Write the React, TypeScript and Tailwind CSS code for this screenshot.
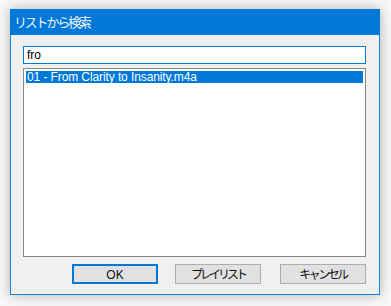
export default function App() {
  return (
    <div className="h-[306px] w-[391px] bg-[#f7f7f7] pl-[10px] pt-[9px] [font-family:'Liberation_Sans','Noto_Sans_CJK_JP',sans-serif]">
      <div className="flex h-[286px] w-[370px] flex-col border border-t-0 border-[#1883d7] bg-[#f0f0f0] shadow-[0_0_12px_rgba(0,0,0,0.28)]">
        <div className="-mx-px flex h-[26px] items-center bg-[#0078d7] pl-[4px]">
          <span className="text-[13px] tracking-[-2.2px] text-[#eef4fb] [font-family:'Noto_Sans_CJK_JP',sans-serif]">
            リストから検索
          </span>
        </div>
        <div className="flex flex-1 flex-col pl-[12px] pr-[13px] pt-[11px]">
          <div className="flex h-[18px] items-center border border-[#0078d7] bg-white pl-[3px] text-[12px] text-black">
            fro
          </div>
          <div className="mt-[4px] h-[189px] border border-[#828790] bg-white p-[2px]">
            <div className="flex h-[12px] items-center bg-[#0078d7] pl-[1px] text-[12px] leading-none tracking-[-0.1px] text-white">
              01 - From Clarity to Insanity.m4a
            </div>
          </div>
          <div className="mt-[7px] flex justify-end gap-[17px] text-[12px] text-[#111]">
            <button className="h-[20px] w-[86px] border-2 border-[#0078d7] bg-[#e1e1e1] [font-family:'Liberation_Sans',sans-serif]">
              OK
            </button>
            <button className="h-[20px] w-[86px] border border-[#adadad] bg-[#e1e1e1] tracking-[-3px] [font-family:'Noto_Sans_CJK_JP',sans-serif]">
              プレイリスト
            </button>
            <button className="ml-[2px] h-[20px] w-[86px] border border-[#adadad] bg-[#e1e1e1] tracking-[-2.5px] [font-family:'Noto_Sans_CJK_JP',sans-serif]">
              キャンセル
            </button>
          </div>
        </div>
      </div>
    </div>
  );
}
